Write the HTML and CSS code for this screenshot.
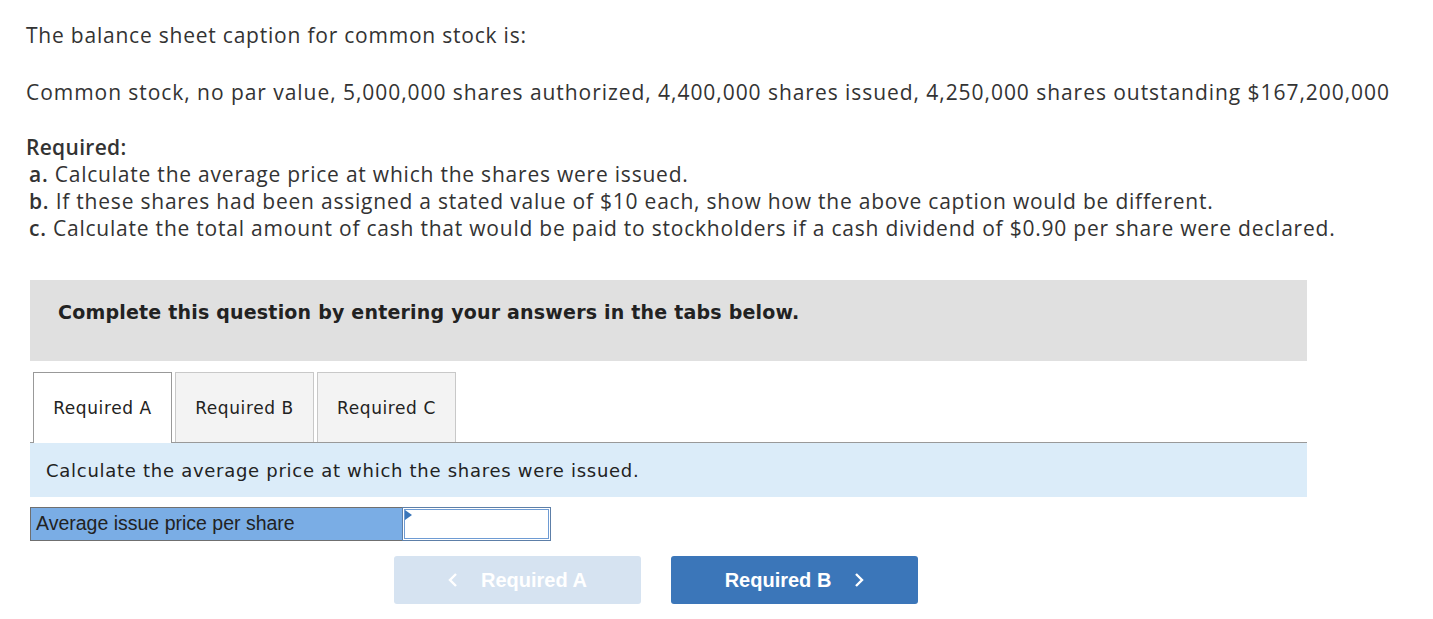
FILE: index.html
```html
<!DOCTYPE html>
<html lang="en">

<head>
    <meta charset="UTF-8">
    <title>Common Stock Caption</title>
    <link rel="stylesheet" href="styles.css">
</head>

<body>
    <div class="question">
        <p class="intro">The balance sheet caption for common stock is:</p>
        <p class="caption">Common stock, no par value, 5,000,000 shares authorized, 4,400,000 shares issued, 4,250,000 shares outstanding $167,200,000</p>

        <div class="required">
            <div class="required-title">Required:</div>
            <div class="req-item"><b>a.</b> Calculate the average price at which the shares were issued.</div>
            <div class="req-item"><b>b.</b> If these shares had been assigned a stated value of $10 each, show how the above caption would be different.</div>
            <div class="req-item"><b>c.</b> Calculate the total amount of cash that would be paid to stockholders if a cash dividend of $0.90 per share were declared.</div>
        </div>
    </div>

    <div class="answer-area">
        <div class="notice">Complete this question by entering your answers in the tabs below.</div>

        <div class="tabs">
            <div class="tab active">Required A</div>
            <div class="tab">Required B</div>
            <div class="tab">Required C</div>
        </div>

        <div class="instruction">Calculate the average price at which the shares were issued.</div>

        <div class="answer-row">
            <div class="answer-label">Average issue price per share</div>
            <div class="answer-input">
                <span class="marker"></span>
                <input type="text">
            </div>
        </div>

        <div class="nav">
            <button class="nav-btn prev" disabled>
                <svg width="10" height="16" viewBox="0 0 10 16"><path d="M8 2 L2 8 L8 14" fill="none" stroke="#fff" stroke-width="2.4"/></svg>
                <span>Required A</span>
            </button>
            <button class="nav-btn next">
                <span>Required B</span>
                <svg width="10" height="16" viewBox="0 0 10 16"><path d="M2 2 L8 8 L2 14" fill="none" stroke="#fff" stroke-width="2.4"/></svg>
            </button>
        </div>
    </div>
</body>

</html>
```

FILE: styles.css
```css
body {
    margin: 0;
    padding: 0;
    background: #fff;
    color: #333;
    font-family: 'Open Sans', Lato, sans-serif;
}

.question {
    padding: 20px 0 0 26px;
    font-size: 21px;
    letter-spacing: 0.78px;
}

.question p {
    margin: 0;
    line-height: 30px;
}

.intro {
    margin-bottom: 27px !important;
}

.caption {
    margin-bottom: 27px !important;
    letter-spacing: 0.95px;
}

.required {
    line-height: 27px;
}

.required-title,
.req-item b {
    font-weight: 600;
}

.required-title {
    letter-spacing: 0.3px;
}

.req-item {
    padding-left: 3px;
}

.answer-area {
    width: 1277px;
    margin: 38px 0 0 30px;
}

.notice {
    background: #e0e0e0;
    height: 81px;
    box-sizing: border-box;
    padding: 21px 0 0 28px;
    font-family: 'DejaVu Sans', Verdana, sans-serif;
    font-weight: bold;
    font-size: 19px;
    letter-spacing: 0.2px;
    color: #222;
}

.tabs {
    display: flex;
    gap: 3px;
    margin-top: 11px;
    padding-left: 3px;
    border-bottom: 1px solid #999;
}

.tab {
    width: 139px;
    height: 70px;
    box-sizing: border-box;
    border: 1px solid #c8c8c8;
    border-bottom: none;
    background: #f3f3f3;
    display: flex;
    align-items: center;
    justify-content: center;
    font-family: 'DejaVu Sans', Verdana, sans-serif;
    font-size: 17px;
    letter-spacing: 0.6px;
    color: #222;
}

.tab.active {
    background: #fff;
    border-color: #999;
    height: 71px;
    margin-bottom: -1px;
}

.instruction {
    background: #dbecf9;
    height: 54px;
    box-sizing: border-box;
    padding: 17px 0 0 16px;
    font-family: 'DejaVu Sans', Verdana, sans-serif;
    font-size: 18px;
    letter-spacing: 0.72px;
    color: #222;
}

.answer-row {
    display: flex;
    margin-top: 10px;
    height: 34px;
}

.answer-label {
    width: 372px;
    box-sizing: border-box;
    background: #7aade5;
    border: 1px solid #6f6f6f;
    border-right: none;
    padding: 4px 0 0 5px;
    font-family: 'Liberation Sans', Arial, sans-serif;
    font-size: 19.5px;
    color: #222;
}

.answer-input {
    position: relative;
    width: 149px;
    box-sizing: border-box;
    border: 1px solid #5d7fa8;
    padding: 1px;
}

.answer-input input {
    width: 100%;
    height: 100%;
    box-sizing: border-box;
    border: 1px solid #6e9bd3;
    margin: 0;
    outline: none;
}

.marker {
    position: absolute;
    top: 2px;
    left: 2px;
    width: 0;
    height: 0;
    border-top: 5px solid transparent;
    border-bottom: 5px solid transparent;
    border-left: 7px solid #3b76b9;
}

.nav {
    display: flex;
    gap: 30px;
    margin: 15px 0 0 364px;
}

.nav-btn {
    width: 247px;
    height: 48px;
    border: none;
    border-radius: 3px;
    display: flex;
    align-items: center;
    justify-content: center;
    gap: 23px;
    font-family: 'Liberation Sans', Arial, sans-serif;
    font-weight: bold;
    font-size: 20px;
    color: #fff;
    cursor: pointer;
}

.nav-btn.prev {
    background: #d6e3f1;
    cursor: default;
}

.nav-btn.next {
    background: #3b76b9;
}
```
